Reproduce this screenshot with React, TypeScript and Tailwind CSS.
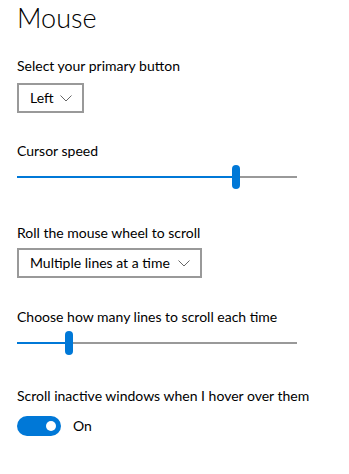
import React from "react";

const font = { fontFamily: 'Lato, "Open Sans", sans-serif' };

function Chevron() {
    return (
        <svg width="12" height="7" viewBox="0 0 12 7" fill="none" className="shrink-0">
            <path d="M0.5 0.5 L6 6 L11.5 0.5" stroke="#666" strokeWidth="1" />
        </svg>
    );
}

function Dropdown({ label, width }: { label: string; width: string }) {
    return (
        <div className={`flex items-center justify-between h-[30px] border-2 border-[#999] pl-[11px] pr-[10px] ${width}`}>
            <span className="text-[14px] leading-5 text-black whitespace-nowrap">{label}</span>
            <Chevron />
        </div>
    );
}

function Slider({ offset }: { offset: number }) {
    return (
        <div className="relative h-6 w-[280px]">
            <div className="absolute left-0 right-0 top-[11px] h-[2px] bg-[#999]"></div>
            <div className="absolute left-0 top-[11px] h-[2px] bg-[#0078d7]" style={{ width: offset }}></div>
            <div className="absolute top-0 h-6 w-2 rounded-full bg-[#0078d7]" style={{ left: offset }}></div>
        </div>
    );
}

export default function App() {
    return (
        <div className="w-[349px] h-[474px] bg-white pl-[17px] pt-[3px] text-black" style={font}>
            <h1 className="text-[27px] leading-[30px] font-light">Mouse</h1>

            <p className="mt-[23px] text-[14px] leading-5">Select your primary button</p>
            <div className="mt-[7px]">
                <Dropdown label="Left" width="w-[67px]" />
            </div>

            <p className="mt-[28px] text-[14px] leading-5">Cursor speed</p>
            <div className="mt-1">
                <Slider offset={215} />
            </div>

            <p className="mt-[34px] text-[14px] leading-5">Roll the mouse wheel to scroll</p>
            <div className="mt-[5px]">
                <Dropdown label="Multiple lines at a time" width="w-[185px]" />
            </div>

            <p className="mt-[29px] text-[14px] leading-5">Choose how many lines to scroll each time</p>
            <div className="mt-1">
                <Slider offset={48} />
            </div>

            <p className="mt-[31px] text-[14px] leading-5">Scroll inactive windows when I hover over them</p>
            <div className="mt-[10px] flex items-center gap-3">
                <div className="relative h-5 w-11 rounded-full bg-[#0078d7]">
                    <div className="absolute right-[5px] top-[5px] h-[10px] w-[10px] rounded-full bg-white"></div>
                </div>
                <span className="text-[14px] leading-5">On</span>
            </div>
        </div>
    );
}
